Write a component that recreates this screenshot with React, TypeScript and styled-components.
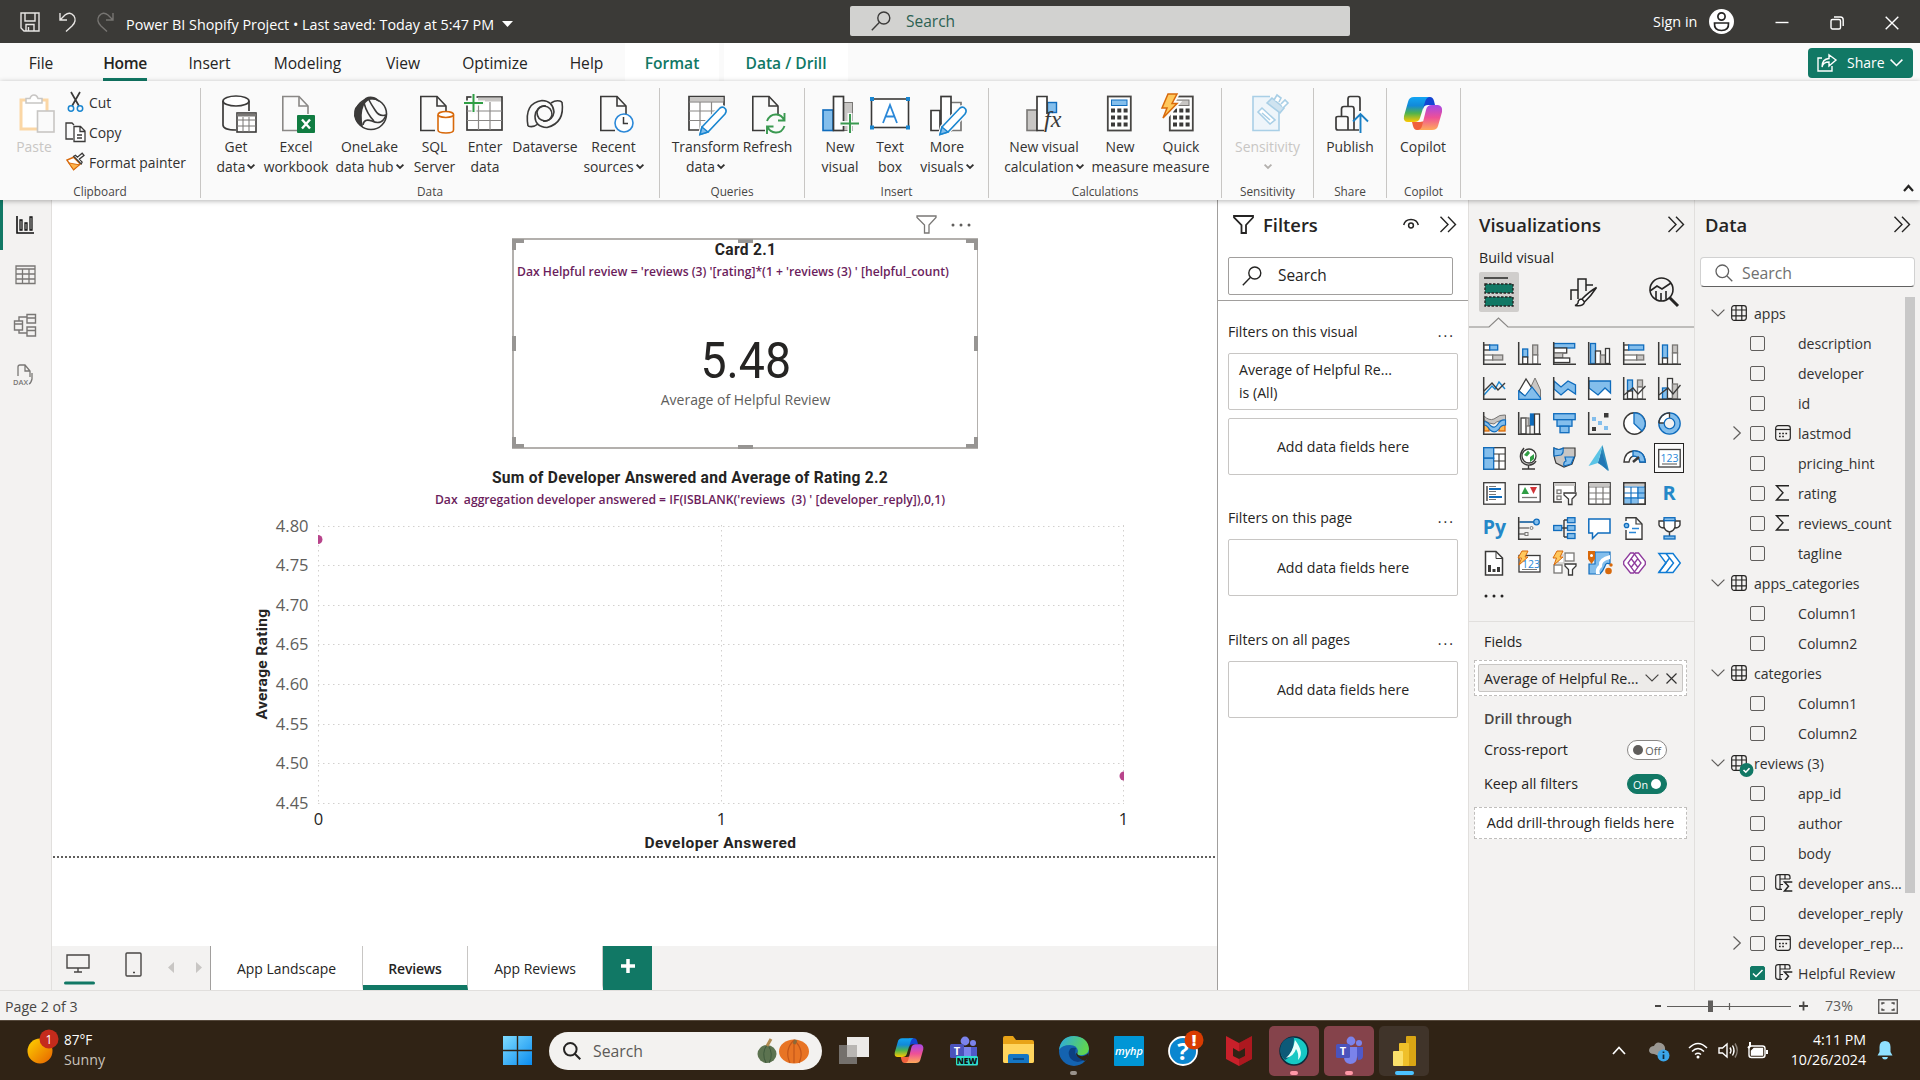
import React from "react";
import styled, { createGlobalStyle, css } from "styled-components";

const GlobalStyle = createGlobalStyle`
  * { box-sizing: border-box; }
  body { margin: 0; background: #f3f2f1; overflow: hidden; }
  #root { font-family: "Open Sans", "Noto Sans", sans-serif; color: #252423; }
`;

const DARK = "#3b3a39";
const BLUE = "#83beec";
const DEEP = "#0f6cbd";
const GREY = "#c8c6c4";
const MID = "#797775";
const GREEN = "#117865";

const Shell = styled.div`
  width: 1920px;
  height: 1080px;
  display: flex;
  flex-direction: column;
  overflow: hidden;
  white-space: pre;
`;
const Svg = styled.svg<{ $ml?: number }>`
  display: block;
  flex: none;
  overflow: visible;
  fill: none;
  margin-left: ${(p) => p.$ml ?? 0}px;
`;
const Spacer = styled.div<{ $h: number }>`
  height: ${(p) => p.$h}px;
`;

/* ---------- title bar ---------- */
const TitleBar = styled.header`
  height: 43px;
  flex: none;
  display: flex;
  align-items: center;
  background: #3b3a37;
  color: #fff;
  font-size: 14px;
  padding-left: 20px;
`;
const QuickAccess = styled.div`
  width: 106px;
  display: flex;
  gap: 19px;
`;
const DocTitle = styled.div`
  width: 724px;
  display: flex;
  align-items: center;
  gap: 8px;
  padding-top: 5px;
  font-size: 14.35px;
`;
const TitleSearch = styled.div`
  width: 500px;
  height: 30px;
  margin-top: -1px;
  border-radius: 2px;
  background: #d2d2d0;
  color: #2c6152;
  display: flex;
  align-items: center;
  gap: 15px;
  padding-left: 21px;
  font-size: 15.5px;
`;
const SignIn = styled.div`
  margin-left: 303px;
  display: flex;
  align-items: center;
  gap: 12px;
  font-size: 14.4px;
`;
const WindowButtons = styled.div`
  display: flex;
  gap: 41px;
  margin: 3px 0 0 41px;
`;

/* ---------- ribbon ---------- */
const TabRow = styled.nav`
  height: 38px;
  flex: none;
  background: #fafafa;
  display: flex;
  font-size: 15.6px;
`;
const Tab = styled.div<{ $w: number; $kind?: "active" | "context" }>`
  width: ${(p) => p.$w}px;
  display: flex;
  justify-content: center;
  align-items: center;
  padding-top: 1px;
  ${(p) =>
    p.$kind === "context" &&
    css`
      background: #fff;
      color: ${GREEN};
      margin-right: 5px;
    `}
  span {
    height: 37px;
    line-height: 38px;
    border-bottom: 3px solid ${(p) => (p.$kind === "active" ? GREEN : "transparent")};
    font-weight: ${(p) => (p.$kind ? 600 : 400)};
    letter-spacing: ${(p) => (p.$kind === "active" ? "-0.4px" : "0")};
  }
`;
const ShareButton = styled.button`
  margin: 5px 7px 0 auto;
  width: 105px;
  height: 30px;
  border: 0;
  border-radius: 4px;
  background: ${GREEN};
  color: #fff;
  font: 14px "Open Sans", sans-serif;
  display: flex;
  align-items: center;
  padding: 0 0 1px 9px;
  span {
    margin: 0 5px 0 10px;
  }
`;
const Ribbon = styled.div`
  height: 119px;
  flex: none;
  background: #fafafa;
  padding-top: 7px;
  display: flex;
  position: relative;
  z-index: 2;
  box-shadow: 0 1px 5px rgba(0, 0, 0, 0.3);
`;
const Group = styled.section<{ $w: number }>`
  width: ${(p) => p.$w}px;
  height: 110px;
  border-right: 1px solid #c8c6c4;
  display: flex;
  flex-direction: column;
`;
const GroupBody = styled.div<{ $pad: number }>`
  height: 96px;
  padding: 6px 0 0 ${(p) => p.$pad}px;
  display: flex;
`;
const GroupLabel = styled.div`
  text-align: center;
  font-size: 11.8px;
  line-height: 14px;
  color: #484644;
`;
const Item = styled.div<{ $w: number; $off?: boolean }>`
  width: ${(p) => p.$w}px;
  flex: none;
  display: flex;
  flex-direction: column;
  align-items: center;
  font-size: 13.9px;
  line-height: 20px;
  color: ${(p) => (p.$off ? "#c8c6c4" : "#323130")};
`;
const ItemText = styled.div`
  margin-top: 2.5px;
  display: flex;
  flex-direction: column;
  align-items: center;
  div {
    height: 20px;
    display: flex;
    align-items: center;
    gap: 2px;
  }
`;
const ClipList = styled.div`
  margin: -7px 0 0 6px;
  display: flex;
  flex-direction: column;
  font-size: 13.9px;
  color: #323130;
`;
const ClipRow = styled.div`
  height: 30px;
  display: flex;
  align-items: center;
  gap: 4px;
`;
const CollapseRibbon = styled.div`
  margin: 96px 6px 0 auto;
`;

/* ---------- workspace ---------- */
const Workspace = styled.main`
  height: 790px;
  flex: none;
  display: flex;
`;
const Rail = styled.aside`
  width: 52px;
  background: #f3f2f1;
  border-right: 1px solid #e1dfdd;
`;
const RailItem = styled.div<{ $on?: boolean }>`
  height: 50px;
  display: flex;
  align-items: center;
  padding: 0 0 1px 10px;
  border-left: 3px solid ${(p) => (p.$on ? GREEN : "transparent")};
`;
const Center = styled.div`
  width: 1165px;
  display: flex;
  flex-direction: column;
  background: #fff;
`;
const Canvas = styled.div`
  height: 746px;
  position: relative;
`;
const PageEnd = styled.div`
  position: absolute;
  left: 1px;
  right: 0;
  top: 656px;
  height: 2px;
  background: repeating-linear-gradient(90deg, #605e5c 0 2px, #fff 2px 4px);
`;
const VisualHeader = styled.div`
  position: absolute;
  left: 864px;
  top: 15px;
  display: flex;
  gap: 14px;
  align-items: center;
`;
const CardVisual = styled.div`
  position: absolute;
  left: 460px;
  top: 38px;
  width: 466px;
  height: 211px;
  border: 2px solid #b3b0ad;
  border-width: 2px 1px 2px 2px;
  padding-top: 1px;
  display: flex;
  flex-direction: column;
  align-items: center;
`;
const Frame = styled(Svg)`
  position: absolute;
  left: -2px;
  top: -2px;
`;
const VisualTitle = styled.div`
  font: 700 15.6px/18px Roboto, sans-serif;
  letter-spacing: 0.26px;
`;
const DaxLine = styled.div<{ $left?: boolean }>`
  font-weight: 600;
  font-size: 12.15px;
  line-height: 16px;
  color: #6b1d5c;
  align-self: ${(p) => (p.$left ? "flex-start" : "center")};
  margin: ${(p) => (p.$left ? "5px 0 0 3px" : "5px 0 0")};
`;
const CardValue = styled.div`
  margin-top: 52px;
  font: 400 50px/58px Roboto, sans-serif;
  transform: scaleX(0.93);
  color: #252423;
`;
const CardLabel = styled.div`
  font-size: 14px;
  line-height: 20px;
  color: #605e5c;
`;
const ScatterVisual = styled.div`
  position: absolute;
  left: 196px;
  top: 269px;
  width: 884px;
  display: flex;
  flex-direction: column;
  align-items: center;
`;
const PageTabs = styled.div`
  height: 44px;
  background: #f3f2f1;
  display: flex;
`;
const ViewSwitch = styled.div`
  width: 159px;
  border-right: 1px solid #a19f9d;
  display: flex;
  padding-left: 12px;
`;
const PageTab = styled.div<{ $w: number; $on?: boolean }>`
  width: ${(p) => p.$w}px;
  background: #fff;
  border-right: 1px solid #c8c6c4;
  border-bottom: 5px solid ${(p) => (p.$on ? GREEN : "#fff")};
  padding-top: 6px;
  display: flex;
  align-items: center;
  justify-content: center;
  font-size: 13.95px;
  font-weight: ${(p) => (p.$on ? 600 : 400)};
  letter-spacing: ${(p) => (p.$on ? "-0.15px" : "0")};
`;
const AddPage = styled.div`
  width: 49px;
  background: ${GREEN};
  display: flex;
  align-items: center;
  justify-content: center;
  padding-bottom: 4px;
`;

/* ---------- panes ---------- */
const Pane = styled.aside<{ $w: number; $bg: string; $line: string }>`
  width: ${(p) => p.$w}px;
  flex: none;
  background: ${(p) => p.$bg};
  border-left: 1px solid ${(p) => p.$line};
  display: flex;
  flex-direction: column;
  overflow: hidden;
`;
const PaneHeader = styled.div<{ $pad: string; $h: number; $gap?: number }>`
  height: ${(p) => p.$h}px;
  flex: none;
  padding: ${(p) => p.$pad};
  display: flex;
  align-items: center;
  h2 {
    margin: 2px auto 0 ${(p) => p.$gap ?? 0}px;
    font-size: 18.4px;
    font-weight: 600;
    line-height: 24px;
  }
`;
const EyeSlot = styled.div`
  margin-right: 21px;
`;
const SearchBox = styled.div`
  margin: 7px 0 5px 10px;
  width: 225px;
  height: 38px;
  border: 1px solid #a19f9d;
  border-radius: 2px;
  display: flex;
  align-items: center;
  gap: 16px;
  padding: 0 0 1px 13px;
  font-size: 15.4px;
`;
const Rule = styled.div`
  border-top: 1px solid #a19f9d;
`;
const FilterSection = styled.div<{ $top: number }>`
  padding: ${(p) => p.$top}px 0 0 10px;
  font-size: 14.15px;
`;
const FilterHead = styled.div`
  width: 227px;
  height: 24px;
  line-height: 24px;
  display: flex;
  justify-content: space-between;
  margin-bottom: 9px;
  i {
    font-style: normal;
    letter-spacing: 2px;
  }
`;
const FilterCard = styled.div<{ $left?: boolean }>`
  width: 230px;
  height: 57px;
  border: 1px solid #c8c6c4;
  border-radius: 2px;
  margin-bottom: 8px;
  display: flex;
  flex-direction: column;
  justify-content: center;
  line-height: 23px;
  padding: ${(p) => (p.$left ? "0 0 2px 10px" : "0")};
  align-items: ${(p) => (p.$left ? "flex-start" : "center")};
`;
const BuildLabel = styled.div`
  height: 24px;
  line-height: 24px;
  padding-left: 10px;
  font-size: 14.2px;
`;
const BuildTabs = styled.div`
  height: 56px;
  display: flex;
  align-items: flex-start;
  padding: 2px 0 0 10px;
`;
const BuildTile = styled.div<{ $on?: boolean; $ml: number }>`
  width: 40px;
  height: 40px;
  margin-left: ${(p) => p.$ml}px;
  border-radius: 2px;
  background: ${(p) => (p.$on ? "#d0cecc" : "transparent")};
  display: flex;
  align-items: center;
  justify-content: center;
`;
const VizGrid = styled.div`
  display: grid;
  grid-template-columns: repeat(6, 35px);
  grid-auto-rows: 35px;
  padding: 10px 0 0 9px;
`;
const VizCell = styled.div<{ $on?: boolean }>`
  width: 30px;
  height: 30px;
  margin: 0 0 0 1px;
  border: 1px solid ${(p) => (p.$on ? "#252423" : "transparent")};
  background: ${(p) => (p.$on ? "#fafafa" : "transparent")};
  display: flex;
  align-items: center;
  justify-content: center;
`;
const MoreDots = styled.div`
  height: 39px;
  padding: 11px 0 0 15px;
  border-bottom: 1px solid #e1dfdd;
`;
const Wells = styled.div`
  padding: 8px 0 0 5px;
  font-size: 14.3px;
`;
const WellText = styled.div<{ $h: number; $strong?: boolean }>`
  height: ${(p) => p.$h}px;
  width: 193px;
  padding-left: 10px;
  display: flex;
  align-items: center;
  justify-content: space-between;
  font-weight: ${(p) => (p.$strong ? 600 : 400)};
  color: ${(p) => (p.$strong ? "#484644" : "#252423")};
  > span {
    padding-bottom: 2px;
  }
`;
const Well = styled.div<{ $h: number; $lift?: boolean }>`
  width: 213px;
  height: ${(p) => p.$h}px;
  border: 1px dashed #c0bebc;
  background: #fff;
  display: flex;
  align-items: center;
  justify-content: center;
  padding-bottom: ${(p) => (p.$lift ? 2 : 0)}px;
`;
const Pill = styled.div`
  width: 205px;
  height: 28px;
  border: 1px solid #c8c6c4;
  border-radius: 2px;
  background: #edebe9;
  display: flex;
  align-items: center;
  justify-content: space-between;
  padding: 0 5px;
`;
const Toggle = styled.div<{ $on?: boolean }>`
  width: 40px;
  height: 20px;
  border-radius: 10px;
  border: 1px solid ${(p) => (p.$on ? GREEN : "#8a8886")};
  background: ${(p) => (p.$on ? GREEN : "#fff")};
  color: ${(p) => (p.$on ? "#fff" : "#605e5c")};
  display: flex;
  flex-direction: ${(p) => (p.$on ? "row-reverse" : "row")};
  align-items: center;
  justify-content: space-between;
  padding: 0 5px;
  font-size: 10.8px;
  &::before {
    content: "";
    width: 10px;
    height: 10px;
    border-radius: 5px;
    background: ${(p) => (p.$on ? "#fff" : "#605e5c")};
  }
`;
const DataSearch = styled.div`
  margin: 7px 0 0 5px;
  width: 215px;
  height: 30px;
  border: 1px solid #d1d1d1;
  border-bottom-color: #616161;
  border-radius: 4px;
  background: #fff;
  display: flex;
  align-items: center;
  gap: 9px;
  padding: 2px 0 0 14px;
  font-size: 15.8px;
  color: #707070;
`;
const TreeArea = styled.div`
  height: 693px;
  display: flex;
  justify-content: space-between;
  padding: 11px 5px 0 0;
`;
const Tree = styled.div`
  width: 210px;
  height: 682px;
  overflow: hidden;
`;
const ScrollThumb = styled.div`
  width: 10px;
  height: 596px;
  margin-top: -1px;
  background: #c8c8c8;
`;
const TableRow = styled.div`
  height: 30px;
  display: flex;
  align-items: center;
  padding-left: 16px;
  color: #323130;
  font-size: 14.1px;
  svg + svg {
    margin: 0 7px 0 6px;
  }
`;
const FieldRow = styled.div`
  height: 30px;
  display: grid;
  grid-template-columns: 17px 25px 22px auto;
  align-items: center;
  padding-left: 38px;
  color: #323130;
  font-size: 14.1px;
  span {
    padding-left: 1px;
  }
`;
const Check = styled.div<{ $on?: boolean }>`
  width: 15px;
  height: 15px;
  border: 1px solid ${(p) => (p.$on ? GREEN : "#605e5c")};
  border-radius: 2px;
  background: ${(p) => (p.$on ? GREEN : "transparent")};
`;

/* ---------- status and taskbar ---------- */
const StatusBar = styled.footer`
  height: 30px;
  flex: none;
  background: #f3f2f1;
  border-top: 1px solid #e1dfdd;
  display: flex;
  align-items: center;
  padding: 1px 22px 0 5px;
  font-size: 14.2px;
  color: #484644;
`;
const ZoomArea = styled.div`
  margin-left: auto;
  display: flex;
  align-items: center;
`;
const Percent = styled.span`
  width: 53px;
  margin-left: 17px;
  padding-bottom: 2px;
  color: #605e5c;
`;
const Taskbar = styled.div`
  height: 60px;
  flex: none;
  background: #302315;
  border-top: 1px solid #55483b;
  display: flex;
  align-items: center;
  color: #fff;
`;
const Weather = styled.div`
  width: 503px;
  display: flex;
  gap: 6px;
  padding-left: 26px;
  margin-top: -2px;
  font-size: 13.6px;
  line-height: 20px;
  small {
    display: block;
    font-size: 14.2px;
    color: #c8c2bb;
  }
`;
const TaskSearch = styled.div`
  width: 273px;
  height: 38px;
  margin: 0 4px 0 17px;
  border-radius: 19px;
  background: #f3f2f0;
  color: #5c5a58;
  display: flex;
  align-items: center;
  padding-left: 14px;
  font-size: 15.8px;
  gap: 12px;
`;
const TaskApp = styled.div<{ $tone?: string; $dot?: string; $dw?: number }>`
  width: 55.1px;
  height: 60px;
  flex: none;
  display: flex;
  flex-direction: column;
  align-items: center;
  justify-content: center;
  div {
    width: 50px;
    height: 50px;
    border-radius: 5px;
    background: ${(p) => p.$tone ?? "transparent"};
    display: flex;
    flex-direction: column;
    align-items: center;
    padding-top: 10px;
    gap: 5px;
  }
  div::after {
    content: "";
    width: ${(p) => p.$dw ?? 8}px;
    height: 4px;
    border-radius: 2px;
    background: ${(p) => p.$dot ?? "transparent"};
  }
`;
const Tray = styled.div`
  margin-left: auto;
  padding-right: 27px;
  display: flex;
  align-items: center;
`;
const Clock = styled.div`
  width: 90px;
  margin: -2px 11px 0 8px;
  text-align: right;
  font-size: 14.2px;
  line-height: 20px;
`;

/* ---------- shared icons ---------- */
const Chev = ({ c = "#323130", w = 8, s = 1.8 }: { c?: string; w?: number; s?: number }) => (
  <Svg width={w} height={w / 2 + 1} viewBox={`0 0 ${w} ${w / 2 + 1}`} stroke={c} strokeWidth={s}>
    <path d={`M.6 .6L${w / 2} ${w / 2}L${w - 0.6} .6`} />
  </Svg>
);
const DoubleChev = () => (
  <Svg width="16" height="17" viewBox="0 0 16 17" stroke="#252423" strokeWidth="1.4">
    <path d="M.5 .8L8 8.5L.5 16M8 .8L15.5 8.5L8 16" />
  </Svg>
);
const Loupe = ({ c, s = 20 }: { c: string; s?: number }) => (
  <Svg width={s} height={s} viewBox="0 0 20 20" stroke={c} strokeWidth="1.4">
    <circle cx="12.8" cy="7" r="6" />
    <path d="M8.5 11.3L.8 19.2" />
  </Svg>
);
const LoupeR = ({ c, s = 18, w = 1.3 }: { c: string; s?: number; w?: number }) => (
  <Svg width={s} height={s} viewBox="0 0 18 18" stroke={c} strokeWidth={w}>
    <circle cx="7.3" cy="7.3" r="6.3" />
    <path d="M12 12L17.3 17.3" />
  </Svg>
);
const PageShape = ({ x = 9, c = DARK }: { x?: number; c?: string }) => (
  <g transform={`translate(${x} 0)`} stroke={c} strokeWidth="1.6">
    <path d="M15 36.5H.8V2.5H17L26 12V20" fill="#fafafa" />
    <path d="M17 2.5V12H26" />
  </g>
);
const CopilotMark = ({ id, s = 40 }: { id: string; s?: number }) => (
  <Svg width={s} height={s} viewBox="0 0 40 40">
    <defs>
      <linearGradient id={id + "a"} x1="0" y1="0" x2="0" y2="1">
        <stop offset="0" stopColor="#12a5f4" />
        <stop offset=".35" stopColor="#1289d8" />
        <stop offset=".65" stopColor="#50b34c" />
        <stop offset="1" stopColor="#ffc800" />
      </linearGradient>
      <linearGradient id={id + "b"} x1="0" y1="0" x2="0" y2="1">
        <stop offset="0" stopColor="#a548e8" />
        <stop offset=".5" stopColor="#ee5097" />
        <stop offset="1" stopColor="#ffab5a" />
      </linearGradient>
    </defs>
    <path d="M20 3H27Q30 3 31 7L32 11H25Q21 11 20 15Z" fill="#1345d3" />
    <path d="M9 28H17L22 27L19 36H14Q11 36 10 32Z" fill="#f0603c" />
    <path d="M11 3H26Q23 4 22 8L17 24Q16 28 11 28H5Q0 28 1 22L5 8Q6 3 11 3Z" fill={`url(#${id}a)`} />
    <path d="M29 11H35Q40 12 39 18L35 32Q34 36 29 36H14Q18 36 19 32L23 16Q24 11 29 11Z" fill={`url(#${id}b)`} />
  </Svg>
);
const TeamsMark = ({ badge }: { badge?: boolean }) => (
  <Svg width="29" height="30" viewBox="0 0 29 30">
    <circle cx="24" cy="7" r="3" fill="#7b83eb" />
    <circle cx="16" cy="5" r="4.4" fill="#7b83eb" />
    <path d="M20 11H28V20Q28 24 23 24Z" fill="#5059c9" />
    <path d="M9 11H22V21Q22 28 15 28Q9 27 9 21Z" fill="#7b83eb" />
    <rect x="1" y="8" width="14" height="14" rx="1.5" fill="#4b53bc" />
    <text x="8" y="19" fontSize="11" fontWeight="700" textAnchor="middle" fill="#fff">T</text>
    {badge && (
      <>
        <rect x="7" y="20" width="22" height="9.5" rx="1.5" fill="#30e0d0" />
        <text x="18" y="28" fontSize="8.5" fontWeight="800" textAnchor="middle" fill="#111">NEW</text>
      </>
    )}
  </Svg>
);
const Pencil = ({ x, y }: { x: number; y: number }) => (
  <g transform={`translate(${x} ${y})`}>
    <path d="M2 20L20 1Q23 -1 25.5 2Q27 4 25 7L8 25L0 27.5Z" fill="#fff" stroke="#fafafa" strokeWidth="4" />
    <path d="M2 20L20 1Q23 -1 25.5 2Q27 4 25 7L8 25L0 27.5Z" fill="#fff" stroke="#1a86d0" strokeWidth="1.6" />
    <path d="M2 20L8 25L0 27.5Z" fill={BLUE} stroke="#1a86d0" strokeWidth="1.4" />
  </g>
);
const CalcBody = ({ x, blue }: { x: number; blue?: boolean }) => (
  <g transform={`translate(${x} 0)`}>
    <rect x=".8" y="2.5" width="23" height="34" fill="#fff" stroke="#484644" strokeWidth="1.8" />
    <rect x="4.5" y="6" width="15.5" height="5.5" fill={blue ? BLUE : GREY} stroke={blue ? DEEP : MID} />
    {[15, 22, 29].map((y) =>
      [4, 10.3, 16.6].map((cx) => <rect key={`${cx}-${y}`} x={cx} y={y - 0.5} width="4" height="4" fill={DARK} />)
    )}
  </g>
);

const ribbonIcons: Record<string, React.ReactNode> = {
  getdata: (
    <>
      <g stroke={DARK} strokeWidth="1.7">
        <path d="M7 7V31Q7 36 20 36" />
        <path d="M33 7V17" />
        <ellipse cx="20" cy="7" rx="13" ry="5" fill="#fff" />
      </g>
      <rect x="21" y="19" width="19" height="19" fill="#fff" stroke={DARK} strokeWidth="1.6" />
      <path d="M21 21H40" stroke={MID} strokeWidth="3" />
      <path d="M21 26H40M21 32H40M27 23V38M33 23V38" stroke={MID} />
    </>
  ),
  excel: (
    <>
      <PageShape x={6} c="#8a8886" />
      <rect x="21" y="21" width="18" height="18" rx="1" fill="#107c41" />
      <path d="M26 25.5L34 34.5M34 25.5L26 34.5" stroke="#fff" strokeWidth="2.4" />
    </>
  ),
  onelake: (
    <>
      <circle cx="21" cy="20" r="15.5" stroke={DARK} strokeWidth="1.6" />
      <path d="M4 22Q3 12 12 8Q16 1 24 3Q28 4 29 8Q20 2 14 11Q10 20 13 33Q6 31 4 22Z" fill={DARK} />
      <path d="M14 9Q17 20 24 27M22 27Q32 32 36 21Q29 23 25 16Q21 10 19 6M13 31Q14 24 22 27" stroke={DARK} strokeWidth="1.6" />
    </>
  ),
  sql: (
    <>
      <PageShape x={5} />
      <g stroke="#d8690b" strokeWidth="1.6" fill="#fff">
        <path d="M23 21V36Q23 39 31 39Q38.5 39 38.5 36V21" />
        <ellipse cx="30.8" cy="20.5" rx="7.8" ry="3" />
      </g>
    </>
  ),
  enter: (
    <>
      <rect x="2" y="3" width="35" height="33" fill="#fff" stroke={DARK} strokeWidth="1.7" />
      <rect x="13" y="3.5" width="23" height="4" fill={GREY} />
      <path d="M2 17H37M2 26.5H37M13.5 8V36M25 8V36" stroke="#8a8886" strokeWidth="1.2" />
      <path d="M9 -1V20M-1 9H20" stroke="#fafafa" strokeWidth="5" />
      <path d="M8.5 0V18M-1 9H18" stroke="#2f9e44" strokeWidth="2" />
    </>
  ),
  dataverse: (
    <g stroke={DARK} strokeWidth="1.6">
      <path d="M3 32Q-1 9 17 6.500Q28 7 29 18Q28 26 20 27Q12 26 12 18Q14 11 21 12" />
      <path d="M37 8Q40 29 22 33.500Q10 33 10 22Q11 13 19 12Q27 13 27 21Q25 28 18 27" />
      <path d="M3 32Q8 34 13 30M37 8Q32 5 26 9" />
    </g>
  ),
  recent: (
    <>
      <PageShape x={6} />
      <circle cx="30" cy="29" r="9" fill="#fff" stroke="#2b88d8" strokeWidth="1.6" />
      <path d="M29.5 23V29.5H34" stroke={DARK} strokeWidth="1.5" />
    </>
  ),
  transform: (
    <>
      <path d="M17 36H3V2.5H38V14" fill="#fff" stroke={DARK} strokeWidth="1.7" />
      <rect x="4" y="3" width="33.5" height="4.500" fill={GREY} />
      <path d="M3 8H38" stroke={MID} />
      <path d="M3 17H30M3 26.5H22M14 8V36M25.5 8V24" stroke="#8a8886" strokeWidth="1.2" />
      <Pencil x={14} y={13} />
    </>
  ),
  refresh: (
    <>
      <PageShape x={4} />
      <path d="M17 20H37V40H17Z" fill="#fafafa" />
      <g stroke="#3a9950" strokeWidth="1.9">
        <path d="M19 27Q22 20 28.5 20.5Q34 21 36 26M36.5 19V26.5H30" />
        <path d="M36.5 32Q34 39 27.5 38.5Q22 38 19.5 33M19 40V32.5H25.5" />
      </g>
    </>
  ),
  newvisual: (
    <>
      <rect x="3" y="16" width="10" height="20.5" fill={BLUE} stroke={DEEP} strokeWidth="1.6" />
      <rect x="23.5" y="8.5" width="9" height="28" fill={GREY} stroke={MID} />
      <rect x="13.5" y="2.5" width="10" height="34" fill="#fff" stroke={DARK} strokeWidth="1.7" />
      <path d="M30 19V38M20 29.5H39" stroke="#fafafa" strokeWidth="5" />
      <path d="M30 20V39M20.5 29.5H39" stroke="#3a9950" strokeWidth="2" />
    </>
  ),
  textbox: (
    <>
      <rect x="1.5" y="5" width="37" height="28.5" fill="#fff" stroke={DARK} strokeWidth="1.6" />
      <path d="M13 29L20 11L27 29M15.5 22.5H24.5" stroke="#2b88d8" strokeWidth="1.8" />
      {[[0, 3], [36, 3], [0, 31.5], [36, 31.5]].map(([x, y]) => (
        <rect key={`${x}-${y}`} x={x} y={y} width="4" height="4" fill="#1a86d0" />
      ))}
    </>
  ),
  morevisuals: (
    <>
      <path d="M4 16.5H13V36.5H4Z" fill="#fff" stroke={DARK} strokeWidth="1.7" />
      <path d="M24 8.5H34V36.5H24" fill="#fff" stroke={MID} strokeWidth="1.7" />
      <rect x="14" y="2.5" width="10" height="34" fill="#fff" stroke={DARK} strokeWidth="1.7" />
      <Pencil x={13} y={13} />
    </>
  ),
  newcalc: (
    <>
      <rect x="3" y="16" width="10" height="20.5" fill={GREY} stroke={MID} strokeWidth="1.6" />
      <rect x="23.5" y="8.5" width="9" height="10" fill={BLUE} stroke={DEEP} strokeWidth="1.4" />
      <path d="M20 36.5H13V2.5H23V20" fill="#fff" stroke={DARK} strokeWidth="1.7" />
      <text x="20" y="33" fontSize="24" fontStyle="italic" fontFamily="Liberation Serif, serif" fill={DARK}>fx</text>
    </>
  ),
  measure: <CalcBody x={7} blue />,
  quick: (
    <>
      <CalcBody x={8} />
      <path d="M7 -1H17L12 9H17L2 27L6 14H0Z" fill="#ffd07a" stroke="#fafafa" strokeWidth="4" />
      <path d="M7 0H16L11 9.5H16L2 24L6 14H1Z" fill="#ffc85c" stroke="#d8690b" strokeWidth="1.5" />
    </>
  ),
  sensitivity: (
    <g stroke="#a9cfe6" strokeWidth="1.6" transform="translate(2 0)">
      <path d="M20 2.5H3V36.5H29V18" fill="#eef5fa" />
      <path d="M8 18L12 14L25 26L20 30Z" fill="#fff" />
      <path d="M12 19L20 26" />
      <path d="M17 9L22 4L34 14L30 19Z" fill="#cfe3f0" />
      <path d="M24 6L27 1L31 4L29 8M31 10L35 6L38 9L33 14" fill="#fff" />
    </g>
  ),
  publish: (
    <g stroke={DARK} strokeWidth="1.7" transform="translate(2 0)">
      <path d="M28 17V5Q28 2.500 26 2.500H18Q16 2.500 16 5V12M22 24V15Q22 12.500 20 12.500H12Q9.500 12.500 9.500 15V22M4 24Q4 22.500 6 22.500H14Q16 22.500 16 24V36H6Q4 36 4 34ZM16 36H27M22 15V36" />
      <path d="M28.5 39V20M21 27.5L28.5 20L36 27.5" stroke="#1a7fc4" strokeWidth="1.9" />
    </g>
  ),
  paste: (
    <>
      <rect x="2" y="6" width="26" height="29" fill="#fff" stroke="#fbd7a6" strokeWidth="3" />
      <path d="M7 9V4.5H11Q12 1 15 1Q18 1 19 4.5H23V9Z" fill="#fff" stroke="#c8c6c4" strokeWidth="1.5" />
      <rect x="18.5" y="17" width="16.5" height="21" fill="#fafafa" stroke="#c8c6c4" strokeWidth="1.6" />
    </>
  ),
};

type RItem = [string, number, string, string?, boolean?];
const RibbonItem = ({ it }: { it: RItem }) => {
  const off = it[0] === "sensitivity";
  return (
    <Item $w={it[1]} $off={off}>
      {it[0] === "copilot" ? (
        <CopilotMark id="rc" />
      ) : (
        <Svg width="40" height="40" viewBox="0 0 40 40">{ribbonIcons[it[0]]}</Svg>
      )}
      <ItemText>
        <div>{it[2]}</div>
        {it[3] !== undefined && (
          <div>
            {it[3]}
            {it[4] && <Chev c={off ? "#b3b0ad" : "#323130"} />}
          </div>
        )}
      </ItemText>
    </Item>
  );
};
const groups: { label: string; w: number; pad: number; items: RItem[] }[] = [
  {
    label: "Data", w: 459, pad: 8,
    items: [
      ["getdata", 54, "Get", "data", true], ["excel", 66, "Excel", "workbook"], ["onelake", 81, "OneLake", "data hub", true],
      ["sql", 49, "SQL", "Server"], ["enter", 52, "Enter", "data"], ["dataverse", 68, "Dataverse"], ["recent", 69, "Recent", "sources", true],
    ],
  },
  { label: "Queries", w: 145, pad: 12, items: [["transform", 67, "Transform", "data", true], ["refresh", 57, "Refresh"]] },
  { label: "Insert", w: 184, pad: 10, items: [["newvisual", 50, "New", "visual"], ["textbox", 50, "Text", "box"], ["morevisuals", 64, "More", "visuals", true]] },
  { label: "Calculations", w: 233, pad: 12, items: [["newcalc", 86, "New visual", "calculation", true], ["measure", 66, "New", "measure"], ["quick", 56, "Quick", "measure"]] },
  { label: "Sensitivity", w: 92, pad: 10, items: [["sensitivity", 71, "Sensitivity", "", true]] },
  { label: "Share", w: 73, pad: 6, items: [["publish", 60, "Publish"]] },
  { label: "Copilot", w: 74, pad: 6, items: [["copilot", 60, "Copilot"]] },
];

/* ---------- visualization gallery ---------- */
const Axis = () => <path d="M.7 0V22.3H23" stroke={DARK} strokeWidth="1.5" />;
const R = ({ b, f = "#fff", s = DARK }: { b: [number, number, number, number]; f?: string; s?: string }) => (
  <rect x={b[0]} y={b[1]} width={b[2]} height={b[3]} fill={f} stroke={s} strokeWidth="1.3" />
);
const Bolt = () => <path d="M4 -1H10L7 5H10L1 13L3.5 6H0Z" fill="#ffc85c" stroke="#d8690b" />;
const viz: React.ReactNode[] = [
  <><R b={[0.7, 3, 6, 5]} /><R b={[6.7, 3, 8, 5]} f={BLUE} s={DEEP} /><R b={[0.7, 13, 9, 5]} s={MID} /><R b={[9.7, 13, 10, 5]} f={GREY} s={MID} /><Axis /></>,
  <><R b={[4.7, 7, 5, 8]} f={BLUE} s={DEEP} /><R b={[4.7, 15, 5, 7]} /><R b={[14.7, 3, 5, 10]} f={GREY} s={MID} /><R b={[14.7, 13, 5, 9]} s={MID} /><Axis /></>,
  <><R b={[0.7, 1.5, 21, 4.5]} f={BLUE} s={DEEP} /><R b={[0.7, 6, 13, 5]} /><R b={[0.7, 11, 9, 5]} f={GREY} s={MID} /><R b={[0.7, 16, 16, 4.5]} /><Axis /></>,
  <><R b={[2.5, 1.5, 5, 20]} f={BLUE} s={DEEP} /><R b={[7.5, 9, 5, 13]} /><R b={[12.5, 13, 5, 9]} f={GREY} s={MID} /><R b={[17.5, 6.5, 4, 15]} /><Axis /></>,
  <><R b={[0.7, 3, 5, 5]} /><R b={[5.7, 3, 15, 5]} f={BLUE} s={DEEP} /><R b={[0.7, 13, 13, 5]} s={MID} /><R b={[13.7, 13, 7, 5]} f={GREY} s={MID} /><Axis /></>,
  <><R b={[4.5, 3, 5, 13]} f={BLUE} s={DEEP} /><R b={[4.5, 16, 5, 6]} /><R b={[14.5, 3, 5, 8]} f={GREY} s={MID} /><R b={[14.5, 11, 5, 11]} s={MID} /><Axis /></>,
  <><path d="M1 18L9 9L12 12L16 5L22 12" stroke="#1a86d0" strokeWidth="1.4" /><path d="M1 14L9 6L15 13L22 6" stroke={DARK} strokeWidth="1.4" /><Axis /></>,
  <><path d="M10 16L17 1L22.5 13V22H12Z" fill={GREY} stroke={MID} /><path d="M1 14L8 2L15 13L8 20Z" fill="#fff" stroke={DARK} strokeWidth="1.3" /><path d="M.7 22.3V14L7 19L14 10L22.5 21V22.3Z" fill={BLUE} stroke={DEEP} strokeWidth="1.2" /></>,
  <><path d="M1 4L8 10L15 4L22.5 8V17L15 12L8 18L1 12Z" fill={BLUE} stroke={DEEP} strokeWidth="1.3" /><Axis /></>,
  <><path d="M1 12L10 19L17 12L22.5 17V22H1Z" fill="#fff" /><path d="M1 4H22.5V16L17 11L10 18L1 11Z" fill={BLUE} stroke={DEEP} strokeWidth="1.3" /><Axis /></>,
  <><R b={[4.5, 3, 5, 11]} f={BLUE} s={DEEP} /><R b={[4.5, 14, 5, 8]} /><R b={[14.5, 3, 5, 7]} f={GREY} s={MID} /><R b={[14.5, 10, 5, 12]} s={MID} /><path d="M1 18L10 11L15 17L22.5 9" stroke={DARK} strokeWidth="1.3" /><Axis /></>,
  <><R b={[4.5, 11, 5, 11]} f={BLUE} s={DEEP} /><R b={[9.5, 1.5, 5, 20]} /><R b={[14.5, 7, 5, 15]} f={GREY} s={MID} /><path d="M1 18L10 11L15 17L22.5 8" stroke={DARK} strokeWidth="1.3" /><Axis /></>,
  <><path d="M1 4Q6 9 11 7Q17 2 22.5 3V10Q16 7 11 12Q6 12 1 8Z" fill={GREY} stroke={MID} /><R b={[1, 13, 5, 6]} f="#ffb54d" s="#d8690b" /><R b={[16, 13, 6, 6]} f="#ffb54d" s="#d8690b" /><path d="M1 9Q5 10 8 14Q12 17 15 12Q18 7 22.5 8V13Q18 13 16 17Q12 22 7 18Q4 13 1 13Z" fill={BLUE} stroke={DEEP} strokeWidth="1.2" /><Axis /></>,
  <><R b={[3, 6, 5, 16]} /><R b={[8, 6, 3, 8]} f={GREY} s={MID} /><R b={[12.5, 2, 3, 11]} f={DEEP} s={DEEP} /><path d="M12 13V22" stroke={DARK} /><R b={[16.5, 2, 5, 20]} /><Axis /></>,
  <><R b={[0.7, 1.7, 21.5, 6]} f={BLUE} s={DEEP} /><R b={[4, 7.7, 15, 6.5]} f={BLUE} s={DEEP} /><R b={[7, 14.2, 9, 6.5]} f={BLUE} s={DEEP} /></>,
  <><rect x="16" y="1" width="4.5" height="4.5" fill={DARK} /><rect x="4" y="5" width="4" height="4" fill={BLUE} /><rect x="10" y="9" width="4" height="4" fill={BLUE} /><rect x="4" y="15" width="4" height="4" fill={DARK} /><rect x="16" y="14" width="4" height="4" fill={BLUE} /><Axis /></>,
  <><circle cx="11.5" cy="11.5" r="10.7" fill="#fff" stroke={DARK} strokeWidth="1.5" /><path d="M11 .8A10.7 10.7 0 0 1 19 19L11 11.5Z" fill={BLUE} stroke={DEEP} strokeWidth="1.3" /></>,
  <><circle cx="11.5" cy="11.5" r="8.2" stroke={BLUE} strokeWidth="5" /><path d="M3.5 11A8 8 0 0 1 11 3.5" stroke="#fff" strokeWidth="5" /><circle cx="11.5" cy="11.5" r="10.7" stroke={DEEP} strokeWidth="1.3" /><path d="M.8 11A10.7 10.7 0 0 1 11.5 .8V6M.8 11H6" stroke={DARK} strokeWidth="1.3" /><circle cx="11.5" cy="11.5" r="5.3" stroke={DEEP} strokeWidth="1.3" /></>,
  <><R b={[0.7, 0.7, 21.5, 21.5]} /><R b={[0.7, 0.7, 10, 10.5]} f={BLUE} s={DEEP} /><R b={[0.7, 11.2, 10, 11]} f={BLUE} s={DEEP} /><path d="M11 7H22M16 7V22M11 14H16M16 14H22" stroke={DARK} strokeWidth="1.2" /></>,
  <><circle cx="11" cy="9" r="7" fill="#fff" stroke={DARK} strokeWidth="1.3" /><path d="M6 8L10 3.5L12 6L9 9.500ZM12 10L16 7V12L12 15Z" fill="#2f9e44" /><path d="M6 1Q0 8 4 15Q9 20 15 17Q17 16 18 14M10.500 18.500V22M4 22H17" stroke={DARK} strokeWidth="1.4" /></>,
  <><path d="M1 1Q6 4 11 1H22V9L19 17L11 20L3 16Q0 8 1 1Z" fill={GREY} stroke={DARK} strokeWidth="1.2" /><path d="M1 1Q6 4 10 1Q11 6 8 8L1 9ZM12 10H21L18 17L11 19Q10 15 13 14Z" fill={BLUE} stroke={DEEP} strokeWidth="1.2" /></>,
  <><path d="M14.5 -2L21 24L10 16L14.5 -2Z" fill="#2f8fbd" /><path d="M14.5 -2L.5 19L10 16Z" fill="#5bc4e6" /><path d="M10 16L14 18L20 24L14 5Z" fill="#2277b5" /></>,
  <><path d="M1 15Q2 4 11.5 4Q21 4 22.3 15H17Q16 9 11.5 9Q7 9 6 15Z" fill="#fff" stroke={DARK} strokeWidth="1.4" /><path d="M10 4Q21 3 22.3 15H17Q16 9 10 9Z" fill={BLUE} stroke={DEEP} strokeWidth="1.3" /><path d="M10 15L16 10" stroke={DARK} strokeWidth="2.5" /></>,
  <><R b={[0.7, 2.5, 21.5, 17.5]} /><text x="11.5" y="14.5" fontSize="10.5" textAnchor="middle" fill="#2b88d8">123</text><path d="M4 17H19" stroke={MID} strokeWidth="1.3" /></>,
  <><R b={[0.7, 0.7, 21.5, 21.5]} /><path d="M4 4V19" stroke={DARK} strokeWidth="1.4" /><path d="M6 4.500H13M6 9.5H13M6 12.5H13M6 17.5H13" stroke={MID} strokeWidth="1" /><path d="M6 7H18M6 15H19" stroke={DEEP} strokeWidth="1.8" /></>,
  <><R b={[0.7, 2.5, 21.5, 17.5]} /><path d="M3.5 12L7 5L11 12Z" fill="#2f9e44" /><path d="M12 5H19L15.5 12Z" fill="#d13438" /><path d="M4 15.5H19" stroke={MID} strokeWidth="1.3" /></>,
  <><path d="M9 20H.7V.7H22.2V10" fill="#fff" stroke={DARK} strokeWidth="1.4" /><path d="M1 2.5H22" stroke={GREY} strokeWidth="3" /><R b={[4, 8, 4, 3.5]} s={MID} /><R b={[4, 14, 4, 3.5]} s={MID} /><path d="M11 11H23V13L19 17V22.5H15.5V17L11 13Z" fill="#fff" stroke={DARK} strokeWidth="1.3" /></>,
  <><R b={[0.7, 0.7, 21.5, 21.5]} /><path d="M1.5 2.5H21.5" stroke={GREY} strokeWidth="3" /><path d="M1 5H22M1 11H22M1 17H22M8 5V22M15 5V22" stroke={MID} strokeWidth="1.2" /></>,
  <><R b={[0.7, 0.7, 21.5, 21.5]} /><path d="M14 5H22V17H14ZM1 15H14V22H1Z" fill={BLUE} /><path d="M1.5 2.5H21.5" stroke={GREY} strokeWidth="3" /><path d="M1 5H22M1 11H22M1 16H22M8 5V22M15 5V22" stroke={DEEP} strokeWidth="1.1" /><path d="M.7 .7H22.2V22.2H.7Z" stroke={DARK} strokeWidth="1.4" /></>,
  <text x="11" y="18" fontSize="20" fontWeight="700" textAnchor="middle" fill="#2488c8">R</text>,
  <text x="11.5" y="17" fontSize="19.5" fontWeight="700" textAnchor="middle" fill="#2488c8">Py</text>,
  <><path d="M1 5H16M1 11H11M1 17H7" stroke={MID} strokeWidth="1.3" /><path d="M2 5H16" stroke={DEEP} strokeWidth="1.3" /><circle cx="18.5" cy="5" r="2.8" fill={BLUE} stroke={DEEP} strokeWidth="1.3" /><circle cx="13.5" cy="11" r="1.5" stroke={MID} /><rect x="7" y="15.5" width="3" height="3" stroke={MID} /><Axis /></>,
  <><path d="M8 11H14M11 3V20M11 3H14M11 20H14" stroke={DARK} strokeWidth="1.4" /><R b={[0.7, 8.5, 8, 5]} f={BLUE} s={DEEP} /><R b={[14.5, 0.7, 7.5, 5]} f={BLUE} s={DEEP} /><R b={[14.5, 8.5, 7.5, 5]} f={BLUE} s={DEEP} /><R b={[14.5, 16.5, 7.5, 5]} f={BLUE} s={DEEP} /></>,
  <path d="M.8 2H22V16H10L4.5 21.5V16H.8Z" fill="#fff" stroke={DEEP} strokeWidth="1.5" />,
  <><path d="M3 4V.7H13L19 7V22.2H3V13" fill="#fff" stroke={DARK} strokeWidth="1.4" /><path d="M13 .7V7H19" stroke={DARK} strokeWidth="1.2" /><circle cx="3.5" cy="8.5" r="2.2" fill={BLUE} stroke={DEEP} strokeWidth="1.3" /><path d="M9 11.5H16M6 15.5H13" stroke="#2b88d8" strokeWidth="1.5" /></>,
  <><path d="M6 3H17V10Q16 14 11.5 15Q7 14 6 10ZM6 4H1V8Q2 11 6 11M17 4H22V8Q21 11 17 11M11.5 15V19" stroke={DARK} strokeWidth="1.4" fill="#fff" /><R b={[6, 0.7, 11, 3]} f={BLUE} s={DEEP} /><R b={[6, 19, 11, 3]} f={BLUE} s={DEEP} /></>,
  <><path d="M2.5 -.5H13L19.5 6V23H2.5Z" fill="#fff" stroke={DARK} strokeWidth="1.5" /><path d="M13 0V6.5H19.5" stroke={DARK} /><path d="M6.5 13V20M11 17V20M15.5 15V20" stroke={DARK} strokeWidth="3" /></>,
  <><R b={[1, 3.500, 21, 16.500]} /><text x="13" y="15.500" fontSize="10.5" textAnchor="middle" fill="#2b88d8">123</text><path d="M4 17.500H19" stroke={MID} /><Bolt /></>,
  <><R b={[12, 1, 9, 8]} s={MID} /><R b={[1, 13, 8, 8]} s={MID} /><R b={[5, 3, 6, 8]} s={GREY} /><path d="M12 12H23V14L19.5 17.5V23H15.5V17.5L12 14Z" fill="#fff" stroke={DARK} strokeWidth="1.3" /><Bolt /></>,
  <><path d="M7 0H22V12Q18 10 17 14Q15 19 12 22H1V12H7Z" fill={BLUE} stroke={DEEP} strokeWidth="1.2" /><path d="M12 22Q10 18 14 15Q13 9 22 7V3Q10 6 11 13Q7 16 8 22Z" fill="#fff" /><path d="M0 -1H7V7L3.5 12L0 7Z" fill="#d8690b" /><circle cx="3.5" cy="3.500" r="1.500" fill="#fff" /><circle cx="20.5" cy="19" r="3.3" fill="#d8690b" /><circle cx="23" cy="13" r="1.7" fill="#d8690b" /></>,
  <g stroke="#8e3a9d" strokeWidth="1.3"><path d="M7.500 1H10.500L11.500 2L12.500 1H15.500L22.300 9.500V12.500L15.500 21H12.500L11.500 20L10.500 21H7.500L.7 12.500V9.500Z" fill="#fff" /><path d="M11.500 2L5 11L11.500 20L18 11ZM8 6.500L15 15.500M15 6.500L8 15.500" /></g>,
  <g stroke="#0f7bd4" strokeWidth="1.4" fill="#fff"><path d="M.8 1.500H15L22.300 11L15 20.500H.8L8 11Z" /><path d="M8 1.500L15.500 11L8 20.500M11.500 6L.8 20.500M15.500 11L8 20.500" fill="none" /></g>,
];

/* ---------- field list ---------- */
type Field = [string, ("date" | "sum" | "calc" | "")?, boolean?, boolean?];
const tables: { name: string; used?: boolean; fields: Field[] }[] = [
  {
    name: "apps",
    fields: [["description"], ["developer"], ["id"], ["lastmod", "date", true], ["pricing_hint"], ["rating", "sum"], ["reviews_count", "sum"], ["tagline"]],
  },
  { name: "apps_categories", fields: [["Column1"], ["Column2"]] },
  { name: "categories", fields: [["Column1"], ["Column2"]] },
  {
    name: "reviews (3)", used: true,
    fields: [["app_id"], ["author"], ["body"], ["developer ans...", "calc"], ["developer_reply"], ["developer_rep...", "date", true], ["Helpful Review", "calc", false, true]],
  },
];
const TableIcon = ({ used }: { used?: boolean }) => (
  <Svg width="16" height="16" viewBox="0 0 16 16" stroke="#252423" strokeWidth="1.2">
    <rect x=".7" y=".7" width="14.6" height="14.6" rx="2.5" />
    <path d="M.7 5H15.3M.7 10.8H15.3M5 .7V15.3M10.8 .7V15.3" />
    {used && (
      <>
        <circle cx="15.5" cy="15" r="7" fill={GREEN} stroke="none" />
        <path d="M12.5 15L14.8 17.2L18.5 13.3" stroke="#fff" strokeWidth="1.6" />
      </>
    )}
  </Svg>
);
const FieldIcon = ({ kind }: { kind?: string }) =>
  kind === "date" ? (
    <Svg width="16" height="16" viewBox="0 0 16 16" stroke="#252423" strokeWidth="1.2">
      <rect x=".7" y=".7" width="14.6" height="14.6" rx="2.5" />
      <path d="M.7 4.5H15.3" />
      <path d="M4 8.5H12.5M4 11.5H9" strokeWidth="1.7" strokeDasharray="1.7 1.5" />
    </Svg>
  ) : kind === "sum" ? (
    <Svg width="16" height="16" viewBox="0 0 16 16" stroke="#252423" strokeWidth="1.4">
      <path d="M14 .8H1.5L8 7.8L1.5 15H14" />
    </Svg>
  ) : kind === "calc" ? (
    <Svg width="18" height="18" viewBox="0 0 18 18" stroke="#252423" strokeWidth="1.2">
      <path d="M7 15.3H3.2Q.7 15.3 .7 13V3Q.7 .7 3.2 .7H12.8Q15 .7 15 3V5M5 .7V15.3M10 .7V5M5 5H15M5 10.5H8" />
      <path d="M17.3 8H9.5L13.5 12.3L9.5 17H17.3" strokeWidth="1.5" />
    </Svg>
  ) : (
    <i />
  );

/* ---------- chart ---------- */
const yLabels = ["4.80", "4.75", "4.70", "4.65", "4.60", "4.55", "4.50", "4.45"];
const Chart = () => (
  <Svg width="884" height="350" viewBox="0 0 884 350" fontSize="16.5">
    {yLabels.map((t, i) => {
      const y = 17.5 + i * 39.64;
      return (
        <g key={t}>
          <path d={`M70 ${Math.round(y) + 0.5}H876`} stroke="#d2d0ce" strokeDasharray="1.5 3.5" />
          <text x="60.5" y={y + 6} textAnchor="end" fill="#605e5c">{t}</text>
        </g>
      );
    })}
    {[70.5, 473.5, 875.5].map((x, i) => (
      <g key={x}>
        <path d={`M${x} 17V295`} stroke="#d2d0ce" strokeDasharray="1.5 3.5" />
        <text x={x} y="317" textAnchor="middle" fill="#252423">{i ? 1 : 0}</text>
      </g>
    ))}
    <path d="M70 27A4.5 4.5 0 0 1 70 36Z" fill="#b8448b" />
    <path d="M876 263.5A4.5 4.5 0 0 0 876 272.5Z" fill="#b8448b" />
    <g fontFamily="Roboto" fontSize="15.5" fontWeight="700" fill="#252423" textAnchor="middle" letterSpacing=".5">
      <text x="472.5" y="340">Developer Answered</text>
      <text transform="translate(19 156) rotate(-90)" letterSpacing=".35">Average Rating</text>
    </g>
  </Svg>
);
const Dots = ({ c = "#605e5c" }) => (
  <Svg width="20" height="4" viewBox="0 0 20 4">
    <circle cx="2" cy="2" r="1.5" fill={c} />
    <circle cx="10" cy="2" r="1.5" fill={c} />
    <circle cx="18" cy="2" r="1.5" fill={c} />
  </Svg>
);
const Funnel = ({ c, w = 1.5 }: { c: string; w?: number }) => (
  <Svg width="21" height="19" viewBox="0 0 21 19" stroke={c} strokeWidth={w}>
    <path d="M1 1H20V2.5L13 10V18H8.5V10L1 2.5Z" />
  </Svg>
);

const App = () => (
  <Shell>
    <GlobalStyle />
    <TitleBar>
      <QuickAccess>
        <Svg width="20" height="20" viewBox="0 0 20 20" stroke="#e8e6e4" strokeWidth="1.4">
          <path d="M1 1H19V19H4L1 16ZM5 1V9H15V1M6 19V12.5H14V19M8.5 15V19" />
        </Svg>
        <Svg width="18" height="20" viewBox="0 0 18 20" stroke="#e8e6e4" strokeWidth="1.4">
          <path d="M1 1V8H8M1 8L6 3Q11 -1 15 4Q18 9 13 14L7 19.5" />
        </Svg>
        <Svg width="18" height="20" viewBox="0 0 18 20" stroke="#777572" strokeWidth="1.4">
          <path d="M17 1V8H10M17 8L12 3Q7 -1 3 4Q0 9 5 14L11 19.5" />
        </Svg>
      </QuickAccess>
      <DocTitle>
        <span>Power BI Shopify Project • Last saved: Today at 5:47 PM</span>
        <Svg width="11" height="6" viewBox="0 0 11 6"><path d="M0 0H11L5.5 6Z" fill="#fff" /></Svg>
      </DocTitle>
      <TitleSearch><Loupe c="#3b3a39" />Search</TitleSearch>
      <SignIn>
        Sign in
        <Svg width="25" height="25" viewBox="0 0 25 25">
          <circle cx="12.5" cy="12.5" r="12.5" fill="#fff" />
          <circle cx="12.5" cy="7.5" r="3.6" stroke="#252423" strokeWidth="1.7" />
          <path d="M5.5 14H19.5Q20 21.5 12.5 21.5Q5 21.5 5.5 14Z" stroke="#252423" strokeWidth="1.7" />
        </Svg>
      </SignIn>
      <WindowButtons>
        <Svg width="14" height="14" viewBox="0 0 14 14" stroke="#fff" strokeWidth="1.4"><path d="M.5 6.5H13.5" /></Svg>
        <Svg width="14" height="14" viewBox="0 0 14 14" stroke="#fff" strokeWidth="1.4">
          <rect x="1" y="3.5" width="9.5" height="9.5" rx="1.5" /><path d="M4 1H10.5Q13.2 1 13.2 4V10" />
        </Svg>
        <Svg width="14" height="14" viewBox="0 0 14 14" stroke="#fff" strokeWidth="1.4"><path d="M.7 .7L13.3 13.3M13.3 .7L.7 13.3" /></Svg>
      </WindowButtons>
    </TitleBar>

    <TabRow>
      <Tab $w={82}><span>File</span></Tab>
      <Tab $w={86} $kind="active"><span>Home</span></Tab>
      <Tab $w={83}><span>Insert</span></Tab>
      <Tab $w={113}><span>Modeling</span></Tab>
      <Tab $w={78}><span>View</span></Tab>
      <Tab $w={106}><span>Optimize</span></Tab>
      <Tab $w={77}><span>Help</span></Tab>
      <Tab $w={94} $kind="context"><span>Format</span></Tab>
      <Tab $w={124} $kind="context"><span>Data / Drill</span></Tab>
      <ShareButton>
        <Svg width="20" height="18" viewBox="0 0 20 18" stroke="#fff" strokeWidth="1.4">
          <path d="M5 4H1V17H15V12M5 13Q6 8 12 8V12L19 6L12 .8V4.5Q5 5 5 13Z" />
        </Svg>
        <span>Share</span>
        <Chev c="#fff" w={13} s={1.5} />
      </ShareButton>
    </TabRow>

    <Ribbon>
      <Group $w={201}>
        <GroupBody $pad={8}>
          <Item $w={52} $off>
            <Svg $ml={5} width="36" height="40" viewBox="0 0 36 40">{ribbonIcons.paste}</Svg>
            <ItemText>Paste</ItemText>
          </Item>
          <ClipList>
            <ClipRow>
              <Svg width="19" height="20" viewBox="0 0 19 20">
                <path d="M5 0L13 14M14 0L6 14" stroke={DARK} strokeWidth="1.7" />
                <circle cx="5" cy="16.5" r="2.7" stroke="#1a86d0" strokeWidth="1.5" /><circle cx="14" cy="16.5" r="2.7" stroke="#1a86d0" strokeWidth="1.5" />
              </Svg>
              Cut
            </ClipRow>
            <ClipRow>
              <Svg width="19" height="20" viewBox="0 0 19 20" stroke={DARK} strokeWidth="1.3">
                <path d="M7 17H0V1H6L8 3" /><path d="M8 4.5H14.5L19 9V19.5H8ZM14 4.5V9.5H19M11 13H16M11 16H16" fill="#fff" />
              </Svg>
              Copy
            </ClipRow>
            <ClipRow>
              <Svg width="19" height="20" viewBox="0 0 20 20">
                <path d="M8 5L1 8L8 18L15 12Z" fill="#fff" stroke="#d8690b" strokeWidth="1.5" />
                <path d="M3 11L8 18L14 13Z" fill="#ffb54d" stroke="#d8690b" />
                <path d="M8 4L16 12L17 10L14 7L19 3L17 .7L12 5L10 3Z" fill="#fff" stroke={DARK} strokeWidth="1.3" />
              </Svg>
              Format painter
            </ClipRow>
          </ClipList>
        </GroupBody>
        <GroupLabel>Clipboard</GroupLabel>
      </Group>
      {groups.map((g) => (
        <Group key={g.label} $w={g.w}>
          <GroupBody $pad={g.pad}>{g.items.map((it, i) => <RibbonItem key={i} it={it} />)}</GroupBody>
          <GroupLabel>{g.label}</GroupLabel>
        </Group>
      ))}
      <CollapseRibbon>
        <Svg width="11" height="8" viewBox="0 0 11 8" stroke="#252423" strokeWidth="2.2"><path d="M1 7L5.5 2L10 7" /></Svg>
      </CollapseRibbon>
    </Ribbon>

    <Workspace>
      <Rail>
        <RailItem $on>
          <Svg width="24" height="24" viewBox="0 0 24 24" stroke="#111" strokeWidth="1.6">
            <path d="M4 3V20H21" /><path d="M7 7H9V17H7ZM12 10H14V17H12ZM17 4H19V17H17Z" strokeWidth="1.3" />
          </Svg>
        </RailItem>
        <RailItem>
          <Svg width="24" height="24" viewBox="0 0 24 24" stroke="#797775" strokeWidth="1.3">
            <path d="M3 3H22V20.5H3ZM3 6H22M3 11H22M3 16H22M9.5 6V20.5M16 6V20.5" />
          </Svg>
        </RailItem>
        <RailItem>
          <Svg width="24" height="24" viewBox="0 0 24 24" stroke="#797775" strokeWidth="1.4">
            <path d="M1.5 8H9.5V17H1.5ZM1.5 11H9.5M14 1.5H22.5V10H14ZM14 5H22.5M14 14H22.5V23H14ZM14 17.5H22.5M6 8V4H14M6 17V20H14" />
          </Svg>
        </RailItem>
        <RailItem>
          <Svg width="24" height="24" viewBox="0 0 24 24" stroke="#797775" strokeWidth="1.3">
            <path d="M5 13V4Q5 2 7 2H12L17 8V14M12 2V8H17M19 10V16Q18 20 16 21" />
            <text x="0" y="22" fontSize="7.5" fontWeight="600" fill="#797775" stroke="none">DAX</text>
          </Svg>
        </RailItem>
      </Rail>

      <Center>
        <Canvas>
          <VisualHeader><Funnel c="#797775" w={1.3} /><Dots /></VisualHeader>
          <CardVisual>
            <Frame width="466" height="211" viewBox="0 0 466 211" stroke="#979593" strokeWidth="4">
              <path d="M2 12V3H12M454 3H464V12M2 199V208H12M454 208H464V199M226 3H241M226 209H241M2 98V113M464 98V113" />
            </Frame>
            <VisualTitle>Card 2.1</VisualTitle>
            <DaxLine $left>{"Dax Helpful review = 'reviews (3) '[rating]*(1 + 'reviews (3) ' [helpful_count)"}</DaxLine>
            <CardValue>5.48</CardValue>
            <CardLabel>Average of Helpful Review</CardLabel>
          </CardVisual>
          <ScatterVisual>
            <VisualTitle>Sum of Developer Answered and Average of Rating 2.2</VisualTitle>
            <DaxLine>{"Dax  aggregation developer answered = IF(ISBLANK('reviews  (3) ' [developer_reply]),0,1)"}</DaxLine>
            <Chart />
          </ScatterVisual>
          <PageEnd />
        </Canvas>
        <PageTabs>
          <ViewSwitch>
            <Svg width="107" height="44" viewBox="0 0 107 44" stroke="#484644" strokeWidth="1.4">
              <path d="M3 9H25V22H3ZM14 22V26M10 26H18" /><path d="M1.5 37H29.5" stroke={GREEN} strokeWidth="3" strokeLinecap="round" />
              <rect x="62" y="7" width="15" height="23" rx="1" /><path d="M69 26.5H71" />
            </Svg>
            <Svg width="36" height="44" viewBox="0 0 36 44"><path d="M3 16V27L-3 21.5ZM25 16V27L31 21.5Z" fill="#c8c6c4" /></Svg>
          </ViewSwitch>
          <PageTab $w={152}>App Landscape</PageTab>
          <PageTab $w={105} $on>Reviews</PageTab>
          <PageTab $w={135}>App Reviews</PageTab>
          <AddPage><Svg width="14" height="14" viewBox="0 0 14 14"><path d="M7 0V14M0 7H14" stroke="#fff" strokeWidth="3.5" /></Svg></AddPage>
        </PageTabs>
      </Center>

      <Pane $w={251} $bg="#fff" $line="#a19f9d">
        <PaneHeader $h={50} $pad="0 12px 2px 15px" $gap={9}>
          <Funnel c="#252423" w={1.8} />
          <h2>Filters</h2>
          <EyeSlot>
            <Svg width="16" height="12" viewBox="0 0 16 12" stroke="#252423" strokeWidth="1.5">
              <path d="M.7 7Q2 1.5 8 1.5Q14 1.5 15.3 7" /><circle cx="8" cy="7.5" r="2.4" />
            </Svg>
          </EyeSlot>
          <DoubleChev />
        </PaneHeader>
        <SearchBox><Loupe c="#252423" />Search</SearchBox>
        <Rule />
        <FilterSection $top={19}>
          <FilterHead>Filters on this visual<i>...</i></FilterHead>
          <FilterCard $left><span>Average of Helpful Re...</span><span>is (All)</span></FilterCard>
          <FilterCard>Add data fields here</FilterCard>
        </FilterSection>
        <FilterSection $top={23}>
          <FilterHead>Filters on this page<i>...</i></FilterHead>
          <FilterCard>Add data fields here</FilterCard>
        </FilterSection>
        <FilterSection $top={24}>
          <FilterHead>Filters on all pages<i>...</i></FilterHead>
          <FilterCard>Add data fields here</FilterCard>
        </FilterSection>
      </Pane>

      <Pane $w={226} $bg="#f3f2f1" $line="#e1dfdd">
        <PaneHeader $h={46} $pad="2px 10px 0 10px"><h2>Visualizations</h2><DoubleChev /></PaneHeader>
        <BuildLabel>Build visual</BuildLabel>
        <BuildTabs>
          <BuildTile $on $ml={0}>
            <Svg width="30" height="30" viewBox="0 0 30 30">
              <path d="M0 1H24" stroke="#252423" strokeWidth="1.5" />
              <rect x="1" y="7" width="28" height="9" fill={GREEN} stroke="#252423" strokeDasharray="2.5 1.5" strokeWidth="1.4" />
              <rect x="1" y="20" width="28" height="9" fill={GREEN} stroke="#252423" strokeDasharray="2.5 1.5" strokeWidth="1.4" />
            </Svg>
          </BuildTile>
          <BuildTile $ml={45}>
            <Svg width="28" height="30" viewBox="0 0 28 30" stroke="#252423" strokeWidth="1.5">
              <path d="M1 23V13H8V22M8 13V2H16V14M16 8H23" />
              <path d="M26.5 10.5Q20 14 12 22L14.5 25Q21 19 26.5 10.5ZM12 22Q8 22 8 26Q7 28 5 28.5Q13 30 14.5 25" fill="#fff" />
            </Svg>
          </BuildTile>
          <BuildTile $ml={40}>
            <Svg width="30" height="30" viewBox="0 0 30 30" stroke="#252423" strokeWidth="1.6">
              <circle cx="12.5" cy="12.5" r="11.5" /><path d="M1 14L8 9L13 12L22 6M7 14V22M12 16V24M17 14V22" />
              <path d="M20.5 20.5L29 29" strokeWidth="3" />
            </Svg>
          </BuildTile>
        </BuildTabs>
        <Svg width="225" height="2" viewBox="0 0 225 2" stroke="#8a8886" strokeWidth="1.2"><path d="M0 1H20L29.500 -8L39 1H225" /></Svg>
        <VizGrid>
          {viz.map((v, i) => (
            <VizCell key={i} $on={i === 23}><Svg width="23" height="23" viewBox="0 0 23 23">{v}</Svg></VizCell>
          ))}
        </VizGrid>
        <MoreDots><Dots c="#252423" /></MoreDots>
        <Wells>
          <WellText $h={24}><span>Fields</span></WellText>
          <Spacer $h={6} />
          <Well $h={36}>
            <Pill>
              <span>Average of Helpful Re...</span>
              <Chev w={14} s={1.2} c="#484644" />
              <Svg width="11" height="11" viewBox="0 0 11 11" stroke="#323130" strokeWidth="1.2"><path d="M.5 .5L10.5 10.5M10.5 .5L.5 10.5" /></Svg>
            </Pill>
          </Well>
          <Spacer $h={10} />
          <WellText $h={26} $strong><span>Drill through</span></WellText>
          <WellText $h={36}><span>Cross-report</span><Toggle>Off</Toggle></WellText>
          <WellText $h={32}><span>Keep all filters</span><Toggle $on>On</Toggle></WellText>
          <Spacer $h={7} />
          <Well $h={32} $lift>Add drill-through fields here</Well>
        </Wells>
      </Pane>

      <Pane $w={226} $bg="#f3f2f1" $line="#e1dfdd">
        <PaneHeader $h={50} $pad="0 10px 2px 10px"><h2>Data</h2><DoubleChev /></PaneHeader>
        <DataSearch><LoupeR c="#616161" />Search</DataSearch>
        <TreeArea>
          <Tree>
            {tables.map((t) => (
              <React.Fragment key={t.name}>
                <TableRow><Chev w={14} s={1.2} c="#605e5c" /><TableIcon used={t.used} /><span>{t.name}</span></TableRow>
                {t.fields.map((f, i) => (
                  <FieldRow key={i}>
                    {f[2] ? <Svg width="8" height="14" viewBox="0 0 8 14" stroke="#605e5c" strokeWidth="1.2"><path d="M.5 .5L7.3 7L.5 13.5" /></Svg> : <i />}
                    <Check $on={f[3]}>
                      {f[3] && <Svg width="13" height="13" viewBox="0 0 13 13" stroke="#fff" strokeWidth="1.5"><path d="M2 6.5L5 9.5L11.5 3" /></Svg>}
                    </Check>
                    <FieldIcon kind={f[1]} />
                    <span>{f[0]}</span>
                  </FieldRow>
                ))}
              </React.Fragment>
            ))}
          </Tree>
          <ScrollThumb />
        </TreeArea>
      </Pane>
    </Workspace>

    <StatusBar>
      Page 2 of 3
      <ZoomArea>
        <Svg width="154" height="14" viewBox="0 0 154 14" stroke="#605e5c">
          <path d="M1 7H7M145 7H154M149.500 2.500V11.500" strokeWidth="1.8" stroke="#484644" />
          <path d="M13 7.5H137M75.5 4V11" strokeWidth="1.2" />
          <path d="M56.500 1.5V13" strokeWidth="5" />
        </Svg>
        <Percent>73%</Percent>
        <Svg width="20" height="15" viewBox="0 0 20 15" stroke="#605e5c" strokeWidth="1.4">
          <path d="M.7 .7H19.3V14.3H.7Z" /><path d="M4 5.5V4H6.5M13.5 4H16V5.5M16 9.5V11H13.5M6.5 11H4V9.5" stroke="#484644" />
        </Svg>
      </ZoomArea>
    </StatusBar>

    <Taskbar>
      <Weather>
        <Svg width="32" height="38" viewBox="0 0 32 38">
          <defs><linearGradient id="sun" x1="0" y1="0" x2="1" y2="1"><stop offset="0" stopColor="#ffd400" /><stop offset="1" stopColor="#e66100" /></linearGradient></defs>
          <circle cx="14" cy="21" r="12.5" fill="url(#sun)" />
          <circle cx="23" cy="9" r="9.5" fill="#c42b1c" />
          <text x="23" y="13.5" fontSize="12" textAnchor="middle" fill="#fff">1</text>
        </Svg>
        <div>87°F<small>Sunny</small></div>
      </Weather>
      <Svg width="29" height="29" viewBox="0 0 29 29">
        <defs><linearGradient id="win" x1="0" y1="0" x2="1" y2="1"><stop offset="0" stopColor="#7fdcff" /><stop offset="1" stopColor="#0a8cf0" /></linearGradient></defs>
        <path d="M0 0H13.8V13.8H0ZM15.2 0H29V13.8H15.2ZM0 15.2H13.8V29H0ZM15.2 15.2H29V29H15.2Z" fill="url(#win)" />
      </Svg>
      <TaskSearch>
        <LoupeR c="#252423" w={2} />Search
        <Svg $ml={102} width="54" height="28" viewBox="0 0 54 28">
          <ellipse cx="10" cy="17" rx="9.500" ry="9" fill="#5c7350" /><path d="M10 8Q4 16 9 26M11 8Q17 17 12 26" stroke="#3f5a3c" /><path d="M10 9L14 2" stroke="#b08a50" strokeWidth="3" />
          <ellipse cx="37" cy="14.500" rx="15" ry="12" fill="#e87424" /><path d="M37 3Q27 13 33 26M37 3Q48 13 42 26M37 3V26" stroke="#c4571a" strokeWidth="1.2" /><path d="M37 7L39 3" stroke="#8a6a3a" strokeWidth="3" />
        </Svg>
      </TaskSearch>
      <TaskApp><div><Svg width="30" height="29" viewBox="0 0 30 29"><path d="M0 9H18V28H0Z" fill="#74706c" /><path d="M8 1H30V21H8Z" fill="#eceae8" /><path d="M8 9H18V21H8Z" fill="#b9b6b3" /></Svg></div></TaskApp>
      <TaskApp><div><CopilotMark id="tc" s={30} /></div></TaskApp>
      <TaskApp><div><TeamsMark badge /></div></TaskApp>
      <TaskApp><div><Svg width="31" height="27" viewBox="0 0 31 27"><path d="M0 2Q0 0 2 0H10L13 4H29Q31 4 31 6V25Q31 27 29 27H2Q0 27 0 25Z" fill="#e8a317" /><path d="M0 8H31V25Q31 27 29 27H2Q0 27 0 25Z" fill="#ffd55e" /><path d="M5 27V20Q5 18 7 18H24Q26 18 26 20V27Z" fill="#1576c4" /><path d="M10 23H21" stroke="#0b4a85" strokeWidth="2" /></Svg></div></TaskApp>
      <TaskApp $dot="#9a938c" $dw={7}><div>
        <Svg width="30" height="30" viewBox="0 0 30 30">
          <defs><linearGradient id="edge" x1="0" y1="0" x2="1" y2=".3"><stop offset="0" stopColor="#2aa9e8" /><stop offset="1" stopColor="#5fd552" /></linearGradient></defs>
          <circle cx="15" cy="15" r="15" fill="#1463b0" />
          <path d="M0 14Q2 0 15 0Q29 1 30 13Q29 20 20 19Q17 18 19 15Q18 9 11 9Q3 9 0 14Z" fill="url(#edge)" />
          <path d="M11 13Q8 18 12 23Q18 29 27 23Q22 21 18 20Q15 17 17 12Q13 11 11 13Z" fill="#0c3f82" />
          <path d="M19 15Q17 18 20 19.5Q25 22 29.5 17V21L26 25Q18 22 17 18Z" fill="#302315" />
        </Svg>
      </div></TaskApp>
      <TaskApp><div><Svg width="30" height="30" viewBox="0 0 30 30"><rect width="30" height="30" rx="1" fill="#0096d6" /><text x="15" y="19" fontSize="11" fontStyle="italic" fontWeight="600" textAnchor="middle" fill="#fff">myhp</text></Svg></div></TaskApp>
      <TaskApp><div>
        <Svg width="30" height="30" viewBox="0 0 30 30">
          <circle cx="14" cy="15" r="14" fill="#0a86d0" stroke="#fff" strokeWidth="1.8" />
          <text x="14" y="24" fontSize="24" fontWeight="700" textAnchor="middle" fill="#fff">?</text>
          <circle cx="25" cy="4" r="9.5" fill="#d83b01" /><text x="25" y="10" fontSize="16" fontWeight="800" textAnchor="middle" fill="#fff">!</text>
        </Svg>
      </div></TaskApp>
      <TaskApp><div><Svg width="26" height="30" viewBox="0 0 26 30"><path d="M0 0L13 7L26 0V23L13 30L0 23Z" fill="#c8202a" /><path d="M7 12L13 15.500L19 12V20L13 23L7 20Z" fill="#302315" /><path d="M13 7V15.500L19 12V20L13 23V30L26 23V0Z" fill="#7a0c0c" opacity=".35" /></Svg></div></TaskApp>
      <TaskApp $tone="#85434b" $dot="#ff98a6"><div>
        <Svg width="30" height="30" viewBox="0 0 30 30"><circle cx="15" cy="15" r="14" fill="#16c8c4" stroke="#0b2c3c" strokeWidth="1.5" /><path d="M15 1Q1 2 1 15Q2 21 6 24Q15 20 15 1Z" fill="#0d5a78" /><path d="M16 4Q14 16 7 22Q15 20 17 13Q20 17 19 24Q26 17 16 4Z" fill="#e6fffb" /></Svg>
      </div></TaskApp>
      <TaskApp $tone="#85434b" $dot="#ff98a6"><div><TeamsMark /></div></TaskApp>
      <TaskApp $tone="#40342a" $dot="#4cc2ff" $dw={19}><div>
        <Svg width="23" height="30" viewBox="0 0 23 30"><rect x="13" width="10" height="30" rx="1" fill="#d9a514" /><rect x="6" y="7" width="10" height="23" rx="1" fill="#efc02a" /><rect y="15" width="10" height="15" rx="1" fill="#fbe06a" /></Svg>
      </div></TaskApp>
      <Tray>
        <Svg width="14" height="9" viewBox="0 0 14 9" stroke="#fff" strokeWidth="1.7"><path d="M1 8L7 1.5L13 8" /></Svg>
        <Svg $ml={23} width="22" height="24" viewBox="0 0 22 24">
          <path d="M5 15Q0 15 0 11Q1 7 5 7Q7 2 12 4Q17 6 16 12L10 17Z" fill="#9a9792" />
          <circle cx="14.5" cy="16.5" r="6" fill="#3ba5e8" /><path d="M14.5 12.5V14M14.5 15.5V20" stroke="#10283a" strokeWidth="1.7" />
        </Svg>
        <Svg $ml={17} width="20" height="17" viewBox="0 0 20 17" stroke="#fff" strokeWidth="1.5">
          <path d="M1 6Q10 -3 19 6M4 9.5Q10 3.5 16 9.5M7 12.5Q10 10 13 12.5" /><circle cx="10" cy="15" r="1.5" fill="#fff" stroke="none" />
        </Svg>
        <Svg $ml={10} width="20" height="17" viewBox="0 0 20 17" stroke="#fff" strokeWidth="1.4">
          <path d="M1 6H4.5L9 2V15L4.5 11H1ZM12 5.5Q14 8.5 12 11.5M14.5 3.5Q17.5 8.5 14.5 13.5" /><path d="M17 1.5Q21.5 8.5 17 15.5" stroke="#8a827a" />
        </Svg>
        <Svg $ml={9} width="21" height="17" viewBox="0 0 21 17" stroke="#fff" strokeWidth="1.4">
          <rect x="2" y="4" width="16" height="11.5" rx="2.5" /><path d="M7 6.5H15.5V13H4.5V9Z" fill="#fff" /><path d="M20 8V12M3 0V4L1 6" strokeWidth="2" />
        </Svg>
        <Clock><div>4:11 PM</div><div>10/26/2024</div></Clock>
        <Svg width="16" height="19" viewBox="0 0 16 19"><path d="M8 0Q13.5 0 13.5 6V11L15.5 14.5H.5L2.5 11V6Q2.5 0 8 0ZM5 16H11Q10.5 18.5 8 18.5Q5.5 18.5 5 16Z" fill="#8fe0ff" /></Svg>
      </Tray>
    </Taskbar>
  </Shell>
);

export default App;
